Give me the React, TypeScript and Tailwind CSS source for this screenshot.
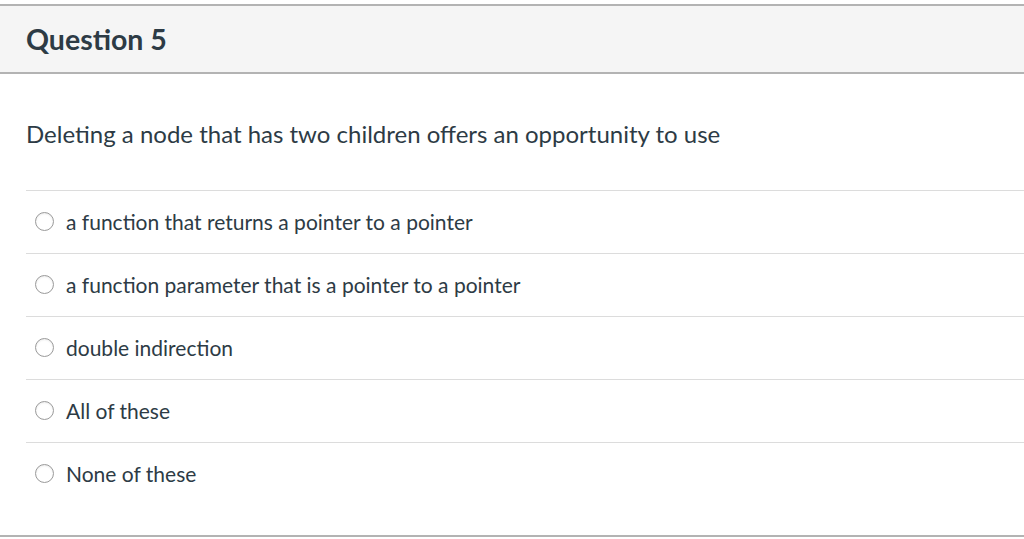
const options = [
  "a function that returns a pointer to a pointer",
  "a function parameter that is a pointer to a pointer",
  "double indirection",
  "All of these",
  "None of these",
];

export default function App() {
  return (
    <div className="min-h-[539px] bg-white pt-1 font-['Lato','Noto_Sans',sans-serif] text-[#2d3b45]">
      <div className="border-y-2 border-[#b3b3b3]">
        <div className="flex h-[68px] items-center border-b-2 border-[#b3b3b3] bg-[#f5f5f5] px-[26px]">
          <h2 className="text-[28.5px] font-bold leading-none">Question 5</h2>
        </div>
        <div className="pl-[26px]">
          <div className="flex h-[116px] items-center pt-[4px]">
            <p className="text-[24px] leading-none">Deleting a node that has two children offers an opportunity to use</p>
          </div>
          <ul>
            {options.map(o => <li key={o} className="flex h-[63px] items-center gap-[12px] border-t border-[#dcdcdc] pl-[9px] pb-[1px]">
                <span className="h-[19px] w-[19px] shrink-0 rounded-full border border-[#9a9a9a] bg-white shadow-[inset_0_1px_2px_rgba(0,0,0,0.08)]" />
                <span className="text-[21px] leading-none">{o}</span>
              </li>)}
          </ul>
          <div className="h-[30px]" />
        </div>
      </div>
    </div>
  );
}
